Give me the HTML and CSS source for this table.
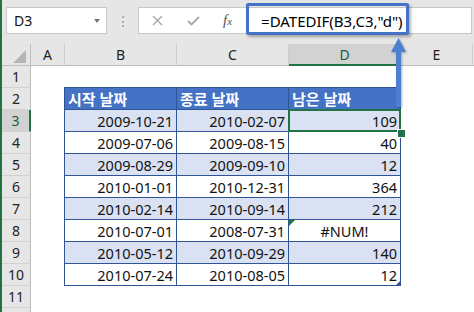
FILE: index.html
```html
<!DOCTYPE html>
<html lang="ko">

<head>
    <meta charset="UTF-8">
    <title>DATEDIF</title>
    <link rel="stylesheet" href="styles.css">
</head>

<body>
    <div class="app">
        <div class="bar">
            <div class="namebox"><span>D3</span><span class="caret"></span></div>
            <div class="grip"><i></i><i></i><i></i></div>
            <div class="fbox">
                <svg class="ico-x" width="11" height="11" viewBox="0 0 11 11"><path d="M1 1L10 10M10 1L1 10" stroke="#a8a8a8" stroke-width="1.4" fill="none"/></svg>
                <svg class="ico-ok" width="13" height="10" viewBox="0 0 13 10"><path d="M1 5L4.5 8.5L12 1" stroke="#a8a8a8" stroke-width="1.8" fill="none"/></svg>
                <span class="fx">f<small>x</small></span>
                <span class="formula">=DATEDIF(B3,C3,"d")</span>
            </div>
            <div class="callout"></div>
        </div>

        <div class="sheet">
            <div class="corner"></div><div class="ch">A</div><div class="ch">B</div><div class="ch">C</div><div class="ch on">D</div><div class="ch">E</div><div class="ch end"></div>

            <div class="rh">1</div><div></div><div></div><div></div><div></div><div></div><div></div>

            <div class="rh">2</div><div></div>
            <div class="td th first top">시작 날짜</div><div class="td th top">종료 날짜</div><div class="td th top">남은 날짜</div>
            <div></div><div></div>

            <div class="rh on">3</div><div></div>
            <div class="td band first">2009-10-21</div><div class="td band">2010-02-07</div><div class="td band sel">109</div>
            <div></div><div></div>

            <div class="rh">4</div><div></div>
            <div class="td first">2009-07-06</div><div class="td">2009-08-15</div><div class="td">40</div>
            <div></div><div></div>

            <div class="rh">5</div><div></div>
            <div class="td band first">2009-08-29</div><div class="td band">2009-09-10</div><div class="td band">12</div>
            <div></div><div></div>

            <div class="rh">6</div><div></div>
            <div class="td first">2010-01-01</div><div class="td">2010-12-31</div><div class="td">364</div>
            <div></div><div></div>

            <div class="rh">7</div><div></div>
            <div class="td band first">2010-02-14</div><div class="td band">2010-09-14</div><div class="td band">212</div>
            <div></div><div></div>

            <div class="rh">8</div><div></div>
            <div class="td first">2010-07-01</div><div class="td">2008-07-31</div><div class="td err">#NUM!</div>
            <div></div><div></div>

            <div class="rh">9</div><div></div>
            <div class="td band first">2010-05-12</div><div class="td band">2010-09-29</div><div class="td band">140</div>
            <div></div><div></div>

            <div class="rh">10</div><div></div>
            <div class="td first">2010-07-24</div><div class="td">2010-08-05</div><div class="td last">12</div>
            <div></div><div></div>

            <div class="rh">11</div><div></div><div></div><div></div><div></div><div></div><div></div>
            <div class="rh"></div><div></div><div></div><div></div><div></div><div></div><div></div>
        </div>

        <!-- arrow from the selected cell up to the formula -->
        <svg class="arrow" width="17" height="71" viewBox="0 0 17 71">
            <path d="M8.5 1L16 15H11V70H6V15H1Z" fill="#4f7fd0"/>
        </svg>
    </div>
</body></html>
```

FILE: styles.css
```css
* {
    box-sizing: border-box;
}

body {
    margin: 0;
    width: 474px;
    height: 312px;
    overflow: hidden;
    background-color: #fff;
    font-family: "Noto Sans", "Noto Sans CJK KR", sans-serif;
    color: #111;
}

.app {
    position: relative;
    height: 312px;
    overflow: hidden;
    border-left: 2px solid #217346;
}

/* formula bar */

.bar {
    display: flex;
    align-items: flex-start;
    height: 44px;
    padding: 7px 2px 0 4px;
    background-color: #e6e6e6;
}

.namebox {
    display: flex;
    align-items: center;
    width: 101px;
    height: 27px;
    padding-left: 7px;
    background-color: #fff;
    border: 1px solid #c6c6c6;
    font-size: 14px;
}

.caret {
    margin-left: auto;
    margin-right: 6px;
    border-top: 4px solid #777;
    border-left: 3.5px solid transparent;
    border-right: 3.5px solid transparent;
}

.grip {
    display: flex;
    flex-direction: column;
    align-items: center;
    gap: 2.5px;
    width: 31px;
    padding-top: 9px;
}

.grip i {
    width: 2px;
    height: 2px;
    background-color: #b0b0b0;
}

.fbox {
    flex: 1;
    display: flex;
    align-items: center;
    height: 27px;
    background-color: #fff;
    border: 1px solid #c6c6c6;
}

.ico-x {
    margin-left: 13px;
}

.ico-ok {
    margin-left: 24px;
}

.fx {
    margin-left: 23px;
    font-family: "Liberation Serif", serif;
    font-style: italic;
    font-size: 15px;
    color: #555;
}

.fx small {
    font-size: 11px;
}

.formula {
    margin-left: 29px;
    font-size: 15px;
    color: #000;
}

.callout {
    position: absolute;
    left: 244px;
    top: 3px;
    width: 163px;
    height: 32px;
    border: 3px solid #4472c4;
    border-radius: 2px;
    box-shadow: 2px 2px 3px rgba(0, 0, 0, 0.3);
}

.arrow {
    position: absolute;
    left: 388px;
    top: 37px;
    filter: drop-shadow(1px 1px 1px rgba(0, 0, 0, 0.3));
}

/* grid */

.sheet {
    display: grid;
    grid-template-columns: 29px 34px 112px 112px 112px 72px 1fr;
    grid-auto-rows: 22px;
}

.corner,
.ch,
.rh {
    display: flex;
    align-items: center;
    justify-content: center;
    background-color: #e6e6e6;
    font-size: 14px;
    color: #222;
}

.corner {
    position: relative;
    border-right: 1px solid #bdbdbd;
    border-bottom: 1px solid #bdbdbd;
}

.corner::after {
    content: "";
    position: absolute;
    right: 4px;
    bottom: 2px;
    border-style: solid;
    border-width: 0 0 13px 13px;
    border-color: transparent transparent #b5b5b5 transparent;
}

.ch {
    border-right: 1px solid #cdcdcd;
    border-bottom: 1px solid #bdbdbd;
}

.ch.end {
    border-right: none;
}

.rh {
    border-right: 1px solid #bdbdbd;
    border-bottom: 1px solid #d2d2d2;
}

.ch.on {
    background-color: #d2d2d2;
    border-bottom: 2px solid #217346;
    color: #1d5e3a;
}

.rh.on {
    background-color: #d2d2d2;
    border-right: 2px solid #217346;
    color: #1d5e3a;
}

/* table */

.td {
    display: flex;
    align-items: center;
    justify-content: flex-end;
    padding: 0 3px;
    border-right: 1px solid #2f5597;
    border-bottom: 1px solid #2f5597;
    font-size: 14.5px;
}

.band {
    background-color: #d9e1f2;
}

.th {
    justify-content: flex-start;
    background-color: #4472c4;
    color: #fff;
    font-weight: 700;
    font-size: 15px;
}

.first {
    box-shadow: -1px 0 0 #2f5597;
}

.top {
    box-shadow: 0 -1px 0 #2f5597;
}

.first.top {
    box-shadow: -1px 0 0 #2f5597, 0 -1px 0 #2f5597, -1px -1px 0 #2f5597;
}

.sel {
    position: relative;
    z-index: 1;
}

.sel::after {
    content: "";
    position: absolute;
    top: -1px;
    left: -1px;
    right: -1px;
    bottom: -1px;
    border: 2px solid #217346;
}

.sel::before {
    content: "";
    position: absolute;
    left: 108px;
    top: 19px;
    width: 7px;
    height: 7px;
    background-color: #217346;
    border: 1px solid #fff;
    z-index: 2;
}

.err {
    position: relative;
    justify-content: center;
}

.err::before {
    content: "";
    position: absolute;
    top: 0;
    left: 0;
    border-top: 6px solid #1e7b34;
    border-right: 6px solid transparent;
}

.last {
    position: relative;
}

.last::after {
    content: "";
    position: absolute;
    right: 0;
    bottom: 0;
    border-bottom: 4px solid #2f5597;
    border-left: 4px solid transparent;
}
```
